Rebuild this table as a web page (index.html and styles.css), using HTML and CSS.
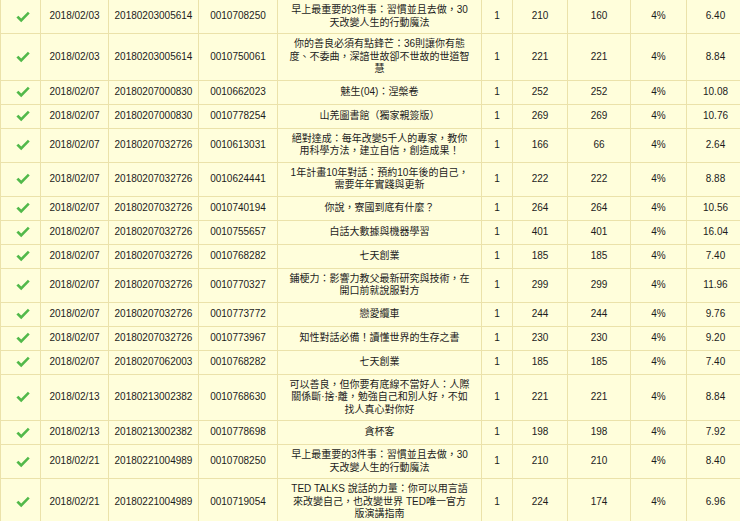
FILE: index.html
```html
<!DOCTYPE html>
<html lang="zh-Hant">
<head>
<meta charset="utf-8">
<title>訂單明細</title>
<link rel="stylesheet" href="styles.css">
</head>
<body>
<table class="orders">
  <colgroup>
    <col class="c-check"><col class="c-date"><col class="c-order"><col class="c-isbn"><col class="c-title">
    <col class="c-qty"><col class="c-price"><col class="c-sale"><col class="c-pct"><col class="c-amt">
  </colgroup>
  <tbody id="rows">
  </tbody>
</table>
<script src="app.js"></script>
</body>
</html>
```

FILE: styles.css
```css
html, body {
  margin: 0;
  padding: 0;
  background: #fffedb;
  overflow: hidden;
}
body {
  font-family: "Liberation Sans", "Noto Sans CJK TC", Arial, sans-serif;
  font-size: 10px;
  color: #1c1c1c;
}
.orders {
  table-layout: fixed;
  border-collapse: collapse;
  width: 744px;
  margin-top: -1px;
  background: #fffedb;
}
.c-check { width: 40px; }
.c-date { width: 68px; }
.c-order { width: 90px; }
.c-isbn { width: 79px; }
.c-title { width: 204px; }
.c-qty { width: 31px; }
.c-price { width: 55px; }
.c-sale { width: 63px; }
.c-pct { width: 56px; }
.c-amt { width: 58px; }
.orders tr {
  height: 24px;
}
.orders td {
  border: 1px solid #ebe2aa;
  padding: 4px 0;
  line-height: 12.5px;
  text-align: center;
  vertical-align: middle;
  white-space: nowrap;
}
.orders td.title {
  white-space: normal;
}
.title-text {
  width: 180.5px;
  margin: 0 auto;
}
.check {
  display: block;
  width: 14px;
  height: 12px;
  margin: 0 auto;
  position: relative;
  left: 2px;
}
.check path {
  fill: #52b94a;
}
```

FILE: app.js
```js
const data = [
  ["2018/02/03","20180203005614","0010708250","早上最重要的3件事：習慣並且去做，30天改變人生的行動魔法","1","210","160","4%","6.40"],
  ["2018/02/03","20180203005614","0010750061","你的善良必須有點鋒芒：36則讓你有態度、不委曲，深諳世故卻不世故的世道智慧","1","221","221","4%","8.84"],
  ["2018/02/07","20180207000830","0010662023","魅生(04)：涅槃卷","1","252","252","4%","10.08"],
  ["2018/02/07","20180207000830","0010778254","山羌圖書館（獨家親簽版）","1","269","269","4%","10.76"],
  ["2018/02/07","20180207032726","0010613031","絕對達成：每年改變5千人的專家，教你用科學方法，建立自信，創造成果！","1","166","66","4%","2.64"],
  ["2018/02/07","20180207032726","0010624441","1年計畫10年對話：預約10年後的自己，需要年年實踐與更新","1","222","222","4%","8.88"],
  ["2018/02/07","20180207032726","0010740194","你說，寮國到底有什麼？","1","264","264","4%","10.56"],
  ["2018/02/07","20180207032726","0010755657","白話大數據與機器學習","1","401","401","4%","16.04"],
  ["2018/02/07","20180207032726","0010768282","七天創業","1","185","185","4%","7.40"],
  ["2018/02/07","20180207032726","0010770327","鋪梗力：影響力教父最新研究與技術，在開口前就說服對方","1","299","299","4%","11.96"],
  ["2018/02/07","20180207032726","0010773772","戀愛纜車","1","244","244","4%","9.76"],
  ["2018/02/07","20180207032726","0010773967","知性對話必備！讀懂世界的生存之書","1","230","230","4%","9.20"],
  ["2018/02/07","20180207062003","0010768282","七天創業","1","185","185","4%","7.40"],
  ["2018/02/13","20180213002382","0010768630","可以善良，但你要有底線不當好人：人際關係斷·捨·離，勉強自己和別人好，不如找人真心對你好","1","221","221","4%","8.84"],
  ["2018/02/13","20180213002382","0010778698","貪杯客","1","198","198","4%","7.92"],
  ["2018/02/21","20180221004989","0010708250","早上最重要的3件事：習慣並且去做，30天改變人生的行動魔法","1","210","210","4%","8.40"],
  ["2018/02/21","20180221004989","0010719054","TED TALKS 說話的力量：你可以用言語來改變自己，也改變世界 TED唯一官方版演講指南","1","224","174","4%","6.96"]
];
const check = '<svg class="check" viewBox="0 0 14 12"><path d="M0.4 6.6 L2.4 4.7 L5.2 7.5 L11.9 0.7 L13.7 2.6 L5.2 11.3 Z"/></svg>';
const tbody = document.getElementById("rows");
tbody.innerHTML = data.map(r => {
  const cells = r.map((v, i) => i === 3
    ? `<td class="title"><div class="title-text">${v}</div></td>`
    : `<td>${v}</td>`).join("");
  return `<tr><td>${check}</td>${cells}</tr>`;
}).join("");
```
